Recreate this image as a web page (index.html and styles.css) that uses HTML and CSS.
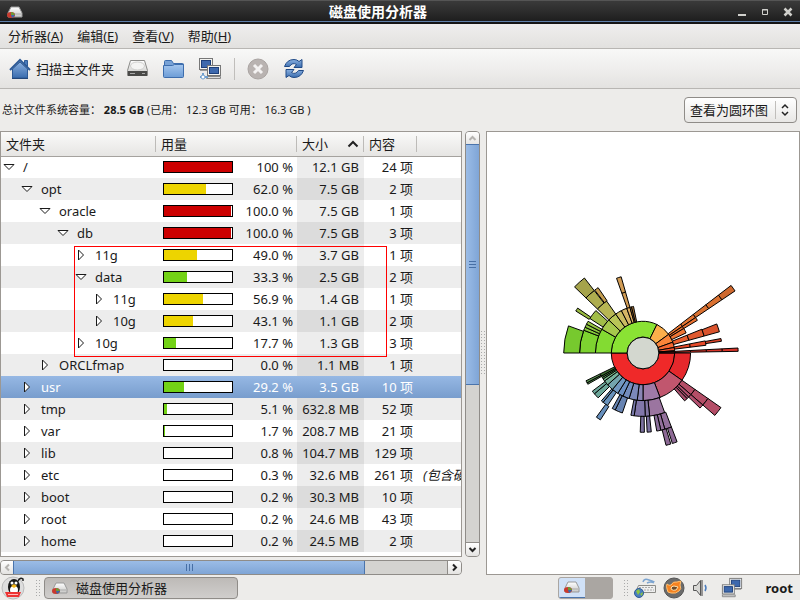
FILE: index.html
```
<!DOCTYPE html>
<html lang="zh-CN">
	<head>
		<meta charset="UTF-8" />
		<title>磁盘使用分析器</title>
		<link rel="stylesheet" href="styles.css">
	</head>
	<body>
		<svg class="defs" aria-hidden="true">
			<defs>
				<linearGradient id="blue" x1="0" y1="0" x2="0" y2="1"><stop offset="0" stop-color="#8ab0e0" /><stop offset="1" stop-color="#3a6cae" /></linearGradient>
				<linearGradient id="folder" x1="0" y1="0" x2="0" y2="1"><stop offset="0" stop-color="#a4c6ee" /><stop offset="1" stop-color="#6c9cd6" /></linearGradient>
				<linearGradient id="metal" x1="0" y1="0" x2="0" y2="1"><stop offset="0" stop-color="#fff" /><stop offset="1" stop-color="#c8c8c6" /></linearGradient>
				<symbol id="baobab" viewBox="0 0 16 14">
					<path d="M4 2h8l3 6v4H1V8z" fill="url(#metal)" stroke="#999" />
					<path d="M2 9h12" stroke="#aaa" />
					<ellipse cx="4" cy="10" rx="4" ry="3" fill="#c93a2e" />
					<path d="M4 10V7q3 0 4 3z" fill="#6c9a3a" />
					<path d="M4 10h4q-1 2-3 3z" fill="#3b68a8" />
				</symbol>
				<symbol id="computers" viewBox="0 0 24 24">
					<rect x="1.500" y="1.500" width="13" height="11" fill="#f3f3f0" stroke="#777" />
					<rect x="3.500" y="3.500" width="9" height="7" fill="#3d68ad" stroke="#1d3f7a" />
					<path d="M2 13.500h12" stroke="#999" />
					<rect x="9.500" y="8.500" width="13" height="10" fill="#f3f3f0" stroke="#777" />
					<rect x="11.500" y="10.500" width="9" height="6" fill="#3d68ad" stroke="#1d3f7a" />
					<path d="M8.500 19.500h14v2h-14z" fill="#ddd" stroke="#888" />
				</symbol>
			</defs>
		</svg>

		<header class="titlebar">
			<svg class="app-icon" width="16" height="14"><use href="#baobab" /></svg>
			<h1>磁盘使用分析器</h1>
			<div class="window-buttons">
				<button aria-label="最小化"><svg width="10" height="10"><path d="M1 8h8" stroke="#d0d0cc" stroke-width="2" /></svg></button>
				<button aria-label="最大化"><svg width="10" height="10"><path d="M2.500 2.500h5v5h-5zM2 3h6" fill="none" stroke="#d0d0cc" /></svg></button>
				<button aria-label="关闭"><svg width="10" height="10"><path d="M1.500 1.500l7 7M8.500 1.500l-7 7" stroke="#d0d0cc" stroke-width="2.500" /></svg></button>
			</div>
		</header>

		<nav class="menubar">
			<button>分析器(<u>A</u>)</button>
			<button>编辑(<u>E</u>)</button>
			<button>查看(<u>V</u>)</button>
			<button>帮助(<u>H</u>)</button>
		</nav>

		<div class="toolbar">
			<button class="home">
				<svg width="22" height="22"><path d="M3.500 11v9h15v-9L11 4z" fill="url(#blue)" stroke="#2d5a97" /><path d="M15.500 2.500h3v6l-3-3z" fill="#4a7cbd" stroke="#2d5a97" /><path d="M1 12L11 2l10 10" fill="none" stroke="#2d5a97" stroke-width="2" /><path d="M3 20.500h16" stroke="#24477a" /></svg>
				扫描主文件夹
			</button>
			<button aria-label="扫描文件系统">
				<svg width="24" height="22"><path d="M4.500 2.500h14l3 10v5h-20v-5z" fill="url(#metal)" stroke="#8a8a88" /><ellipse cx="11.500" cy="8" rx="7" ry="4" fill="#f4f4f3" stroke="#cfcfcd" /><path d="M2 13h19v5H2z" fill="#4a4a48" /><path d="M4 15.500h5M16 15.500h3" stroke="#aaa" /></svg>
			</button>
			<button aria-label="扫描文件夹">
				<svg width="24" height="22"><path d="M2.500 8V3.500q0-1 1-1h6l2 3h9q1 0 1 1V8" fill="#78a2d6" stroke="#3d6dad" /><path d="M1.500 7.500h9l2-1h9v12q0 1-1 1h-18q-1 0-1-1z" fill="url(#folder)" stroke="#3d6dad" /></svg>
			</button>
			<button aria-label="扫描远程文件夹">
				<svg width="24" height="24"><use href="#computers" /><path d="M5 16v4M2 20h8" stroke="#6f9fce" stroke-width="2" /><circle cx="5" cy="20" r="2" fill="#fff" stroke="#6f9fce" /></svg>
			</button>
			<span class="separator"></span>
			<button aria-label="停止" disabled>
				<svg width="24" height="22"><circle cx="11" cy="11" r="10" fill="#b9b3b1" stroke="#aaa4a2" /><path d="M7 7l8 8M15 7l-8 8" stroke="#f4f2f2" stroke-width="3" /></svg>
			</button>
			<button aria-label="刷新">
				<svg width="24" height="22"><path d="M1.500 8.500Q4 1.500 11 1.500q3 0 5 2l3-2v8h-8l2.500-3q-4-2.500-7 2z" fill="url(#blue)" stroke="#204a87" /><path d="M20.500 12.500q-2.500 7-9.500 7-3 0-5-2l-3 2v-8h8l-2.500 3q4 2.500 7-2z" fill="url(#blue)" stroke="#204a87" /></svg>
			</button>
		</div>

		<div class="summary">
			<p>总计文件系统容量： <strong>28.5 GB</strong> (已用： 12.3 GB 可用： 16.3 GB )</p>
			<div class="view-select">
				<select aria-label="查看方式">
					<option>查看为圆环图</option>
					<option>查看为树图</option>
				</select>
				<svg width="10" height="14"><path d="M2 5l3-3 3 3M2 9l3 3 3-3" fill="none" stroke="#222" stroke-width="1.500" /></svg>
			</div>
		</div>

		<main>
			<section class="browser">
				<div class="tree">
					<table>
						<colgroup><col class="c-name"><col class="c-usage"><col class="c-size"><col class="c-items"><col></colgroup>
						<thead>
							<tr>
								<th>文件夹</th>
								<th>用量</th>
								<th><span class="sorted">大小 <svg width="12" height="8"><path d="M1.500 6.500L6 2l4.500 4.500" fill="none" stroke="#222" stroke-width="2" /></svg></span></th>
								<th>内容</th>
								<th></th>
							</tr>
						</thead>
						<tbody id="folders"></tbody>
					</table>
					<div class="highlight"></div>
				</div>
				<div class="scroll vertical">
					<button aria-label="向上" disabled><svg width="9" height="9"><path d="M1.500 6l3-3 3 3" /></svg></button>
					<div class="thumb"><i></i></div>
					<div class="trough"></div>
					<button aria-label="向下"><svg width="9" height="9"><path d="M1.500 3l3 3 3-3" /></svg></button>
				</div>
				<div class="scroll horizontal">
					<button aria-label="向左" disabled><svg width="9" height="9"><path d="M6 1.500l-3 3 3 3" /></svg></button>
					<div class="thumb"><i></i></div>
					<div class="trough"></div>
					<button aria-label="向右"><svg width="9" height="9"><path d="M3 1.500l3 3-3 3" /></svg></button>
				</div>
			</section>
			<div class="handle"></div>
			<section class="chart">
				<svg id="rings" viewBox="-112 -112 224 224" width="222" height="222" role="img" aria-label="圆环图"></svg>
			</section>
		</main>

		<footer class="panel">
			<button class="launcher" aria-label="主菜单">
				<svg width="24" height="24"><circle cx="12" cy="12" r="11" fill="#dedede" stroke="#bbb" /><ellipse cx="13" cy="11" rx="6" ry="8" fill="#171717" /><path d="M17 5q2-4 5-2v2" fill="none" stroke="#222" stroke-width="1.500" /><ellipse cx="13" cy="14" rx="4" ry="4" fill="#fff" /><circle cx="11" cy="7" r="1.500" fill="#fff" /><circle cx="15" cy="7" r="1.500" fill="#fff" /><path d="M10 10l3-2 3 2-3 2z" fill="#f5b71a" /><path d="M4 16h16l-2 5H6z" fill="#e33" /><path d="M7 18.500h10" stroke="#fbb" stroke-width="1" /></svg>
			</button>
			<span class="grip"></span>
			<button class="task"><svg width="16" height="14"><use href="#baobab" /></svg>磁盘使用分析器</button>
			<div class="workspaces">
				<button class="current" aria-label="工作区 1"><svg width="16" height="14"><use href="#baobab" /></svg></button>
				<button aria-label="工作区 2"></button>
			</div>
			<div class="tray">
				<span class="grip"></span>
				<svg width="24" height="22"><path d="M10 5q1-4 6-2t5 1M14 6q4-2 7 0" fill="none" stroke="#7ca4d0" stroke-width="1.500" /><path d="M5.500 8.500h17v7h-20z" fill="#eee" stroke="#8c8c88" /><path d="M6 10.500h15M5 13h16" stroke="#aaa" stroke-dasharray="2 1" /><circle cx="6" cy="16" r="4.500" fill="#4a7ec0" stroke="#2d5a97" /><path d="M3 14l3-2 1 3-2 3zM7 17l3-2-1 4z" fill="#8dc63f" /></svg>
				<svg width="24" height="22"><circle cx="12" cy="11" r="10" fill="#6b6b6b" stroke="#555" /><path d="M5 7q2 2 4 1 2-4 6-3l4-1-1 4q2 4-1 6-3 3-8 2-4 0-4-4-1-3 0-5z" fill="#f58220" stroke="#ffc070" /><path d="M9 12q0-3 3-3l4 1-2 3q-3 1-5-1z" fill="#6b4a2c" stroke="#ffe0a8" /></svg>
				<svg width="24" height="22"><path d="M2.500 8.500h3l4-5v15l-4-5h-3z" fill="#d8d8d5" stroke="#555" /><path d="M11 3v16" stroke="#777" stroke-width="1.500" /><path d="M14 8q2 3 0 6" fill="none" stroke="#4a7cbd" stroke-width="1.500" /></svg>
				<svg width="24" height="22" viewBox="0 0 24 24"><use href="#computers" transform="matrix(-1 0 0 1 24 0)" /></svg>
				<span class="user">root</span>
			</div>
		</footer>
		<script src="script.js"></script>
	</body>
</html>
```
FILE: styles.css
```
* {
	box-sizing: border-box;
}
body {
	display: flex;
	flex-direction: column;
	height: 100vh;
	margin: 0;
	overflow: hidden;
	background: #edecea;
	color: #1a1a1a;
	font: 13px/18px "Noto Sans", "Noto Sans CJK SC", sans-serif;
}
button {
	margin: 0;
	padding: 0;
	border: 0;
	background: none;
	color: inherit;
	font: inherit;
}
svg {
	display: block;
	flex: none;
}
.defs {
	position: absolute;
	width: 0;
	height: 0;
}

/* title bar */
.titlebar {
	display: flex;
	align-items: center;
	flex: none;
	height: 24px;
	padding: 0 7px;
	border-top: 1px solid #555;
	border-bottom: 2px solid #141414;
	background: linear-gradient(#3a3a3a, #2c2c2c 50%, #1c1c1c);
	box-shadow: inset 0 -1px #5f80aa;
}
.titlebar h1 {
	flex: 1;
	margin: 0;
	padding-right: 4px;
	color: #fff;
	font-size: 14px;
	line-height: 20px;
	text-align: center;
}
.window-buttons {
	display: flex;
	gap: 13px;
}

/* menu and tool bars */
.menubar {
	display: flex;
	flex: none;
	gap: 14px;
	height: 25px;
	padding: 0 8px;
	border-bottom: 1px solid #b8b6b3;
	background: linear-gradient(#efeeed, #e2e1df);
}
.toolbar {
	display: flex;
	align-items: center;
	flex: none;
	gap: 12px;
	height: 40px;
	padding: 0 9px;
	border-bottom: 1px solid #b8b6b3;
	background: linear-gradient(#f8f8f7, #efeeed 50%, #e3e2e0);
}
.toolbar .home {
	display: flex;
	align-items: center;
	gap: 5px;
}
.separator {
	width: 1px;
	height: 22px;
	background: #c0bebb;
}

.summary {
	display: flex;
	align-items: center;
	justify-content: space-between;
	flex: none;
	height: 42px;
	padding: 0 3px 0 2px;
	font-size: 11px;
}
.summary p {
	margin: 0;
}
.view-select {
	display: flex;
	align-items: center;
	position: relative;
}
.view-select select {
	width: 113px;
	height: 26px;
	padding: 0 5px;
	border: 1px solid #8f8c88;
	border-radius: 4px;
	background: linear-gradient(#fff, #e8e7e5);
	color: inherit;
	font: 13px "Noto Sans", "Noto Sans CJK SC", sans-serif;
	appearance: none;
}
.view-select::after {
	content: "";
	position: absolute;
	right: 21px;
	height: 18px;
	border-left: 1px solid #c0bebb;
}
.view-select svg {
	position: absolute;
	right: 7px;
	pointer-events: none;
}

/* folder tree */
main {
	display: flex;
	flex: 1;
	min-height: 0;
}
.browser {
	display: grid;
	flex: 0 0 60%;
	grid-template-columns: 1fr 15px;
	grid-template-rows: 1fr 15px;
	gap: 3px;
	min-width: 0;
}
.tree {
	position: relative;
	overflow: hidden;
	border: 1px solid #9c9893;
	background: #fff;
}
.tree table {
	width: 100%;
	border-collapse: collapse;
	table-layout: fixed;
}
.c-name {
	width: 155px;
}
.c-usage {
	width: 141px;
}
.c-size {
	width: 67px;
}
.c-items {
	width: 53px;
}
.tree th {
	position: relative;
	height: 24px;
	padding: 0 5px;
	border-bottom: 1px solid #a5a29e;
	background: linear-gradient(#fafaf9, #e6e5e3);
	font-weight: normal;
	text-align: left;
}
.tree th:not(:last-child)::after {
	content: "";
	position: absolute;
	top: 4px;
	right: 0;
	height: 16px;
	border-right: 1px solid #bdbbb8;
}
.sorted {
	display: flex;
	align-items: center;
	justify-content: space-between;
}
.tree td {
	height: 22px;
	padding: 0 4px;
	text-align: right;
	white-space: nowrap;
}
.tree td:first-child {
	padding: 0 2px;
}
.tree td:nth-child(3) {
	padding: 0 5px 0 0;
	background: #ededed;
}
.tree tr:nth-child(even) td {
	background: #ededed;
}
.tree tr:nth-child(even) td:nth-child(3) {
	background: #dcdcdc;
}
.tree tr.selected td:nth-child(n) {
	background: linear-gradient(#96b8e4, #789dcd);
	color: #fff;
}
.tree td:last-child {
	padding: 0 6px;
	overflow: hidden;
	font-style: italic;
	text-align: left;
}
.name,
.usage {
	display: flex;
	align-items: center;
}
.name {
	gap: 8px;
}
.name svg {
	fill: #fff;
	stroke: #1a1a1a;
}
.usage {
	justify-content: space-between;
}
.bar {
	width: 70px;
	height: 12px;
	margin-left: 3px;
	border: 1px solid #000;
	background: #fff;
}
.bar i {
	display: block;
	height: 100%;
}
.red {
	background: #cc0000;
}
.yellow {
	background: #edd400;
}
.green {
	background: #73d216;
}
.highlight {
	position: absolute;
	top: 114px;
	left: 73px;
	width: 313px;
	height: 111px;
	border: 1px solid #f00;
	pointer-events: none;
}

/* scroll bars */
.scroll {
	display: flex;
	border: 1px solid #8f8c88;
	border-radius: 4px;
	overflow: hidden;
	background: #d4d3d0;
}
.vertical {
	flex-direction: column;
}
.scroll button {
	display: flex;
	align-items: center;
	justify-content: center;
	flex: 0 0 13px;
	background: linear-gradient(#fff, #e4e3e1);
	outline: 1px solid #8f8c88;
}
.scroll button svg {
	fill: none;
	stroke: #222;
	stroke-width: 2;
}
.scroll button:disabled svg {
	stroke: #b5b3b0;
}
.thumb {
	display: flex;
	align-items: center;
	justify-content: center;
	outline: 1px solid #4a74ac;
}
.vertical .thumb {
	flex: 240;
	background: linear-gradient(90deg, #9bbce6, #7fa5d6);
}
.vertical .trough {
	flex: 159;
}
.horizontal .thumb {
	flex: 350;
	background: linear-gradient(#9bbce6, #7fa5d6);
}
.horizontal .trough {
	flex: 84;
}
.thumb i {
	width: 7px;
	height: 7px;
	background: repeating-linear-gradient(#476fa5 0 1px, transparent 1px 3px);
}
.horizontal i {
	background: repeating-linear-gradient(90deg, #476fa5 0 1px, transparent 1px 3px);
}
.handle,
.grip {
	background: radial-gradient(circle, #aaa 1px, transparent 1px) 0 0 / 3px 3px;
}
.handle {
	align-self: center;
	flex: none;
	width: 6px;
	height: 46px;
}
.chart {
	display: flex;
	align-items: center;
	justify-content: center;
	flex: 1;
	border: 1px solid #9c9893;
	background: #fff;
}
#rings path {
	stroke: #000;
}

/* desktop panel */
.panel {
	display: flex;
	align-items: center;
	flex: none;
	gap: 10px;
	height: 25px;
	padding: 0 7px 0 1px;
}
.grip {
	width: 5px;
	height: 18px;
}
.task {
	display: flex;
	align-items: center;
	gap: 8px;
	width: 194px;
	height: 22px;
	margin-left: -6px;
	margin-right: auto;
	padding: 0 7px;
	border: 1px solid #8f8c88;
	border-radius: 4px;
	background: linear-gradient(#bdbab7, #d0cecc);
}
.workspaces {
	display: flex;
	width: 55px;
	height: 22px;
	border: 1px solid #aaa6a2;
	border-radius: 3px;
	overflow: hidden;
	background: #aaa6a2;
}
.workspaces button {
	flex: 1;
}
.workspaces .current {
	display: flex;
	align-items: center;
	justify-content: center;
	border-bottom: 1px solid #4a74ac;
	background: #d0e1f7;
}
.tray {
	display: flex;
	align-items: center;
	gap: 5px;
}
.user {
	margin-left: 17px;
	font-weight: bold;
}
```
FILE: script.js
```
// level, name, state, bar fill, percent, size, items, note
const folders = [
	[0, "/", "open", 100, "100 %", "12.1 GB", 24],
	[1, "opt", "open", 62, "62.0 %", "7.5 GB", 2],
	[2, "oracle", "open", 99, "100.0 %", "7.5 GB", 1],
	[3, "db", "open", 99, "100.0 %", "7.5 GB", 3],
	[4, "11g", "", 49, "49.0 %", "3.7 GB", 1],
	[4, "data", "open", 33.3, "33.3 %", "2.5 GB", 2],
	[5, "11g", "", 56.9, "56.9 %", "1.4 GB", 1],
	[5, "10g", "", 43.1, "43.1 %", "1.1 GB", 2],
	[4, "10g", "", 17.7, "17.7 %", "1.3 GB", 3],
	[2, "ORCLfmap", "", 0, "0.0 %", "1.1 MB", 1],
	[1, "usr", "", 29.2, "29.2 %", "3.5 GB", 10],
	[1, "tmp", "", 5.1, "5.1 %", "632.8 MB", 52],
	[1, "var", "", 1.7, "1.7 %", "208.7 MB", 21],
	[1, "lib", "", 0, "0.8 %", "104.7 MB", 129],
	[1, "etc", "", 0, "0.3 %", "32.6 MB", 261, "(包含硬"],
	[1, "boot", "", 0, "0.2 %", "30.3 MB", 10],
	[1, "root", "", 0, "0.2 %", "24.6 MB", 43],
	[1, "home", "", 0, "0.2 %", "24.5 MB", 2],
];

const opened = '<svg width="12" height="12"><path d="M1 3.500h10L6 8.500z"/></svg>';
const closed = '<svg width="12" height="12"><path d="M3.500 1v10L8.500 6z"/></svg>';

document.getElementById("folders").innerHTML = folders
	.map(([level, name, state, fill, percent, size, items, note]) => {
		const color = fill > 66 ? "red" : fill > 33.3 ? "yellow" : "green";
		return `<tr class="${name === "usr" ? "selected" : ""}">
			<td><div class="name" style="padding-left:${level * 18}px">
				<button aria-label="${state ? "折叠" : "展开"}">${state ? opened : closed}</button>${name}</div></td>
			<td><div class="usage"><span class="bar"><i class="${color}" style="width:${fill}%"></i></span>${percent}</div></td>
			<td>${size}</td><td>${items} 项</td><td>${note || ""}</td></tr>`;
	})
	.join("");

// first ring, last ring, start angle, end angle (clockwise from the right), colour
const sectors = [
	[1, 1, 0, 180, "#ef2929"],
	[1, 1, 180, 296, "#8ae234"],
	[1, 1, 296, 324, "#fcaf4b"],
	[1, 1, 324, 340, "#f98439"],
	[1, 1, 340, 350, "#f46631"],
	[1, 1, 350, 356, "#f0502d"],
	[1, 1, 356, 358, "#a03020"],
	[1, 1, 358, 360, "#a02020"],
	// opt
	[2, 2, 0, 35, "#e5282c"],
	[2, 2, 35, 69, "#c1566e"],
	[3, 5, 35, 41, "#b44e67"],
	[3, 4, 41, 44, "#b1506e"],
	[3, 3, 44, 46, "#a9506e"],
	[3, 3, 46, 49, "#a9506e"],
	[2, 2, 69, 90, "#9f7aa7"],
	[3, 3, 70, 84, "#9b75a0"],
	[3, 3, 84, 88, "#8377a5"],
	[3, 3, 88, 98, "#8177aa"],
	[3, 3, 98, 101, "#7779aa"],
	[4, 4, 69, 74, "#93709c"],
	[4, 4, 74, 77, "#93709c"],
	[4, 4, 77, 80, "#8c709c"],
	[5, 5, 69, 72, "#8c6994"],
	[5, 5, 73, 76, "#8c6994"],
	[4, 4, 84, 87, "#7b71a0"],
	[4, 4, 89, 92, "#7b71a0"],
	[2, 2, 90, 97, "#8985b5"],
	[2, 2, 97, 107, "#7b88b9"],
	[2, 2, 107, 115, "#728cbd"],
	[2, 2, 115, 122, "#6c90c3"],
	[2, 2, 122, 130, "#7197c0"],
	[2, 2, 130, 138, "#74a4ae"],
	[2, 2, 138, 144, "#76b09c"],
	[2, 2, 144, 147, "#78b888"],
	[2, 2, 147, 149, "#65aa66"],
	[2, 2, 149, 151, "#519447"],
	[2, 2, 151, 154, "#3b7030"],
	[3, 3, 109, 116, "#6784b3"],
	[3, 3, 116, 119, "#6784b3"],
	[3, 3, 124, 129, "#6891bb"],
	[3, 3, 129, 131, "#6891bb"],
	[4, 4, 122.5, 126, "#668fbd"],
	[3, 3, 135, 140, "#6ca69a"],
	[3, 3, 140, 143, "#6ca69a"],
	[3, 3, 150.5, 152, "#5b9453"],
	[3, 3, 152, 154, "#5b9453"],
	// usr
	[2, 2, 180, 210, "#83db32"],
	[3, 3, 180, 201, "#7dd230"],
	[4, 4, 180, 200, "#77c92e"],
	[3, 3, 201, 204, "#86c93b"],
	[3, 3, 204, 207, "#8dc83f"],
	[3, 3, 207, 210, "#97c843"],
	[2, 2, 210, 224, "#a6c94c"],
	[3, 3, 213, 222, "#a1bd48"],
	[4, 4, 212, 214.5, "#98b941"],
	[2, 2, 224, 235, "#b9c557"],
	[3, 3, 224, 235, "#b7b653"],
	[4, 4, 224, 232, "#aead4f"],
	[4, 4, 232.5, 235.5, "#c59e50"],
	[5, 5, 224, 232, "#a5a34b"],
	[2, 2, 235, 243, "#cabb61"],
	[2, 2, 243, 250, "#d6b566"],
	[2, 2, 250, 254, "#dfae63"],
	[2, 2, 254, 256, "#b98442"],
	[2, 2, 256, 258.5, "#a77235"],
	[3, 4, 250.5, 254, "#d19c55"],
	// the rest
	[2, 2, 322.5, 326, "#ef7934"],
	[3, 3, 322.5, 326, "#e47633"],
	[4, 5, 322.5, 326, "#da7131"],
	[6, 6, 322.5, 326, "#cf692e"],
	[2, 3, 326, 329, "#e9702f"],
	[2, 2, 329, 335, "#ee7636"],
	[2, 2, 338, 344.5, "#ea6030"],
	[3, 3, 338, 344.5, "#df5a30"],
	[4, 4, 338.5, 344.5, "#da542e"],
	[2, 3, 349, 353, "#e64b2b"],
	[4, 4, 349.5, 351.5, "#da442a"],
	[2, 5, 357, 359, "#d63429"],
];

const point = (ring, angle) => {
	const a = (angle * Math.PI) / 180;
	return `${(ring * 16 * Math.cos(a)).toFixed(2)} ${(ring * 16 * Math.sin(a)).toFixed(2)}`;
};

let shapes = "";
for (const [first, last, from, to, color] of sectors) {
	for (let ring = first; ring <= last; ring++) {
		const inner = ring * 16;
		const outer = inner + 16;
		shapes += `<path fill="${color}" d="M${point(ring, from)}L${point(ring + 1, from)}A${outer} ${outer} 0 0 1 ${point(ring + 1, to)}L${point(ring, to)}A${inner} ${inner} 0 0 0 ${point(ring, from)}z"/>`;
	}
}
document.getElementById("rings").innerHTML =
	shapes + '<circle r="16" fill="#d3d7cf" stroke="#000"/>';
```
